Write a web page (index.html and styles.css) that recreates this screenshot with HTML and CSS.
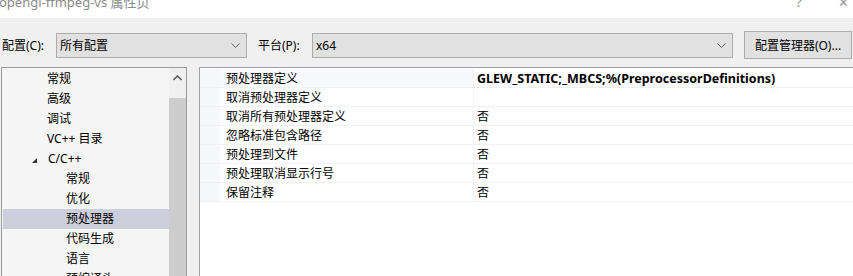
FILE: index.html
```html
<!DOCTYPE html>
<html lang="zh">
<head>
<meta charset="utf-8">
<link rel="stylesheet" href="styles.css">
</head>
<body>
<div class="titlebar">
  <span class="title">opengl-ffmpeg-vs 属性页</span>
  <span class="tb-btns"><span class="help">?</span><span class="close">✕</span></span>
</div>
<div class="toolbar">
  <span class="lbl lbl-config">配置(C):</span>
  <div class="combo combo-config"><span>所有配置</span>
    <svg class="chev" width="9" height="5" viewBox="0 0 9 5"><path d="M0.5 0.5 L4.5 4.5 L8.5 0.5" fill="none" stroke="#606060" stroke-width="1"/></svg>
  </div>
  <span class="lbl lbl-plat">平台(P):</span>
  <div class="combo combo-plat"><span>x64</span>
    <svg class="chev" width="9" height="5" viewBox="0 0 9 5"><path d="M0.5 0.5 L4.5 4.5 L8.5 0.5" fill="none" stroke="#606060" stroke-width="1"/></svg>
  </div>
  <div class="btn">配置管理器(O)...</div>
</div>
<div class="main">
  <div class="tree">
    <ul class="items">
      <li class="l1">常规</li>
      <li class="l1">高级</li>
      <li class="l1">调试</li>
      <li class="l1">VC++ 目录</li>
      <li class="l1 open"><span class="tri"></span>C/C++</li>
      <li class="l2">常规</li>
      <li class="l2">优化</li>
      <li class="l2 sel">预处理器</li>
      <li class="l2">代码生成</li>
      <li class="l2">语言</li>
      <li class="l2">预编译头</li>
    </ul>
    <div class="vscroll">
      <div class="arrow"><svg width="9" height="6" viewBox="0 0 9 6"><path d="M0.5 5 L4.5 1 L8.5 5" fill="none" stroke="#606060" stroke-width="1.6"/></svg></div>
      <div class="thumb"></div>
    </div>
  </div>
  <div class="grid">
    <div class="row"><div class="gut"></div><div class="name">预处理器定义</div><div class="val bold">GLEW_STATIC;_MBCS;%(PreprocessorDefinitions)</div></div>
    <div class="row"><div class="gut"></div><div class="name">取消预处理器定义</div><div class="val"></div></div>
    <div class="row"><div class="gut"></div><div class="name">取消所有预处理器定义</div><div class="val">否</div></div>
    <div class="row"><div class="gut"></div><div class="name">忽略标准包含路径</div><div class="val">否</div></div>
    <div class="row"><div class="gut"></div><div class="name">预处理到文件</div><div class="val">否</div></div>
    <div class="row"><div class="gut"></div><div class="name">预处理取消显示行号</div><div class="val">否</div></div>
    <div class="row"><div class="gut"></div><div class="name">保留注释</div><div class="val">否</div></div>
  </div>
</div>
</body>
</html>
```
FILE: styles.css
```css
* { box-sizing: border-box; }
html, body { margin: 0; padding: 0; }
body {
  width: 853px;
  height: 276px;
  overflow: hidden;
  background: #f0f0f0;
  font-family: "Noto Sans", "Noto Sans CJK SC", sans-serif;
  font-size: 12px;
  color: #000;
}
.titlebar {
  height: 18px;
  background: #fff;
  overflow: hidden;
  display: flex;
  justify-content: space-between;
}
.title {
  margin-top: -8px;
  margin-left: -1px;
  font-size: 13px;
  line-height: 20px;
  color: #8a8a8a;
  white-space: nowrap;
}
.tb-btns {
  display: flex;
  margin-top: -8px;
  font-size: 14px;
  line-height: 20px;
  color: #999;
}
.help { margin-right: 36px; }
.close { margin-right: 4px; font-size: 13px; }
.toolbar {
  display: flex;
  align-items: center;
  height: 28px;
  margin-top: 13px;
}
.lbl { font-size: 12px; white-space: nowrap; }
.lbl-config { margin-left: 2px; width: 54px; }
.lbl-plat { margin-left: 11px; width: 54px; }
.combo {
  height: 25px;
  border: 1px solid #adadad;
  background: #e1e1e1;
  display: flex;
  align-items: center;
  justify-content: space-between;
  padding: 0 6px 0 3px;
}
.combo-config { width: 191px; }
.combo-plat { width: 421px; }
.btn {
  margin-left: 11px;
  width: 108px;
  height: 28px;
  border: 1px solid #adadad;
  background: #e1e1e1;
  display: flex;
  align-items: center;
  justify-content: center;
  white-space: nowrap;
}
.main {
  display: flex;
  margin-top: 8px;
  margin-left: 1px;
  gap: 12px;
}
.tree {
  width: 186px;
  height: 240px;
  border: 1px solid #9a9a9a;
  background: #f5f5f5;
  display: flex;
  padding: 0 0 0 1px;
}
.items {
  list-style: none;
  margin: 0;
  padding: 1px 0 0 0;
  width: 166px;
}
.items li {
  height: 20px;
  line-height: 20px;
  white-space: nowrap;
  display: flex;
  align-items: center;
}
.l1 { padding-left: 44px; }
.l2 { padding-left: 63px; }
.l1.open { padding-left: 29px; }
.tri {
  width: 0; height: 0;
  border-left: 5px solid transparent;
  border-bottom: 5px solid #333;
  margin-right: 11px;
  margin-top: 3px;
}
.sel { background: #cccedb; }
.vscroll {
  width: 17px;
  display: flex;
  flex-direction: column;
  background: #f0f0f0;
}
.arrow {
  height: 30px;
  display: flex;
  justify-content: center;
  padding-top: 7px;
}
.thumb {
  flex: 1;
  background: #cdcdcd;
}
.grid {
  flex: 1;
  height: 240px;
  padding-top: 1px;
  border-top: 1px solid #a0a0a0;
  border-left: 1px solid #a0a0a0;
  background: #fff;
}
.row {
  display: flex;
  height: 19px;
  line-height: 20px;
  border-bottom: 1px solid #f0f0f5;
}
.gut { width: 20px; background: #f5f7fb; }
.name { width: 254px; padding-left: 6px; border-right: 1px solid #f0f0f5; white-space: nowrap; }
.row:first-child .name { background: #f7f9fd; }
.val { flex: 1; padding-left: 3px; white-space: nowrap; }
.bold { font-weight: bold; font-size: 12.5px; }
```
